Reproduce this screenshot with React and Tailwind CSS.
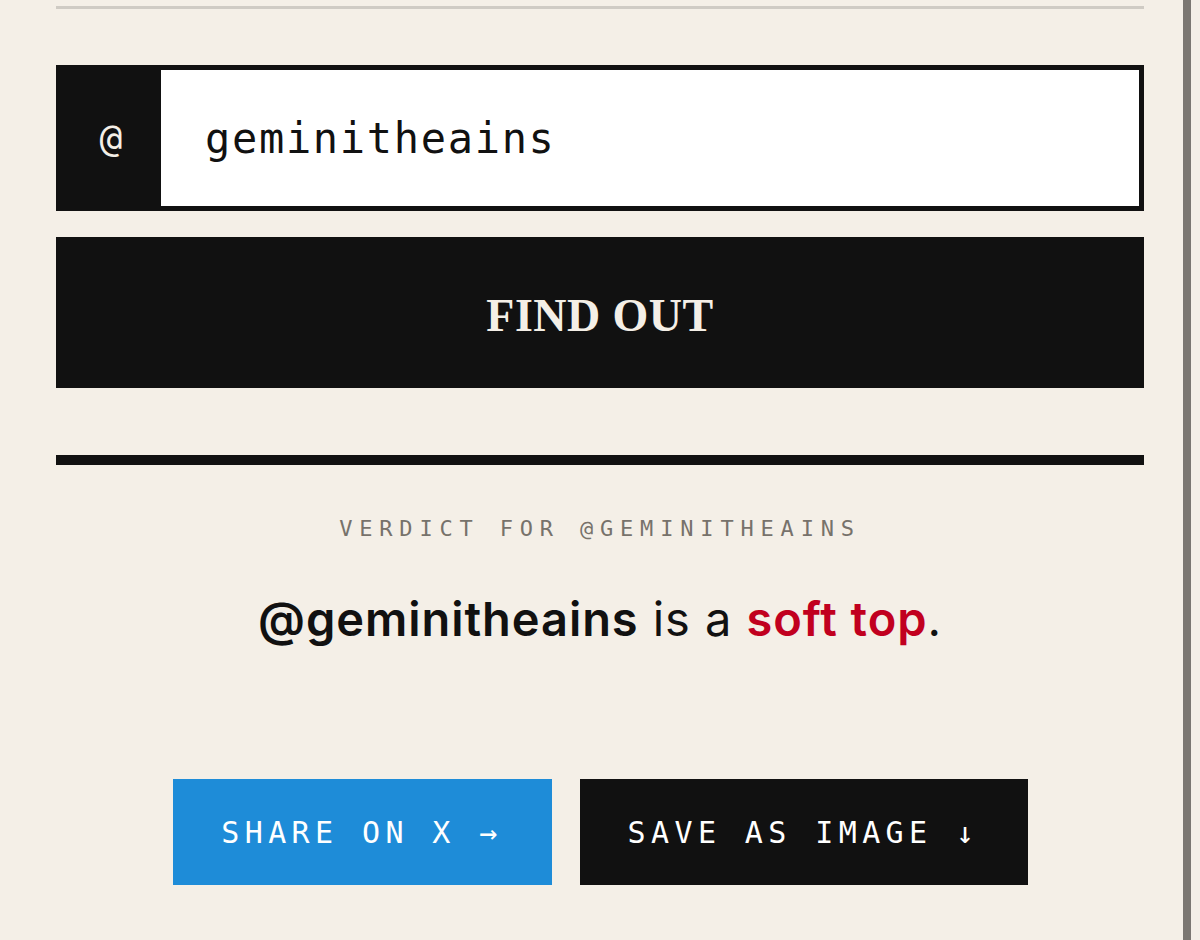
import React, { useState } from 'react';

const mono = { fontFamily: '"DejaVu Sans Mono", monospace' };

function App() {
  const [handle, setHandle] = useState('geminitheains');

  return (
    <div className="h-[940px] w-[1200px] overflow-hidden bg-[#f4efe7] flex">
      <div className="w-[1183px]">
        <div className="ml-[56px] w-[1088px]">
          <div className="mt-[6px] h-[3px] bg-[#cfcbc4]" />

          <div className="mt-[56px] flex h-[146px] border-[5px] border-[#111111] bg-[#111111]">
            <div
              className="flex w-[100px] items-center justify-center text-[38px] text-[#f4efe7]"
              style={mono}
            >
              @
            </div>
            <input
              value={handle}
              onChange={(e) => setHandle(e.target.value)}
              className="flex-1 bg-white pl-[44px] text-[42px] tracking-[0.04em] text-[#111111] outline-none"
              style={mono}
            />
          </div>

          <button className="mt-[26px] flex h-[151px] w-full items-center justify-center bg-[#111111] pt-[6px] font-['Liberation_Serif',serif] text-[46px] font-bold tracking-[0.01em] text-[#f4efe7]">
            FIND OUT
          </button>

          <div className="mt-[67px] h-[10px] bg-[#111111]" />

          <div
            className="mt-[53px] text-center text-[22px] leading-[22px] tracking-[0.31em] text-[#77726b]"
            style={mono}
          >
            VERDICT FOR @GEMINITHEAINS
          </div>

          <p className="mt-[53px] text-center font-['Inter',sans-serif] text-[47px] leading-[52px] tracking-[0.02em] text-[#111111]">
            <span className="font-semibold">@geminitheains</span> is a{' '}
            <span className="font-semibold text-[#c1001f]">soft top</span>.
          </p>

          <div className="mt-[134px] flex justify-center gap-[28px]">
            <button
              className="flex h-[106px] w-[379px] items-center justify-center bg-[#1e8cd8] text-[30px] tracking-[0.18em] text-white"
              style={mono}
            >
              SHARE ON X →
            </button>
            <button
              className="flex h-[106px] w-[448px] items-center justify-center bg-[#111111] text-[30px] tracking-[0.18em] text-white"
              style={mono}
            >
              SAVE AS IMAGE ↓
            </button>
          </div>
        </div>
      </div>
      <div className="w-[8px] bg-[#7b7772]" />
      <div className="flex-1" />
    </div>
  );
}

export default App;
